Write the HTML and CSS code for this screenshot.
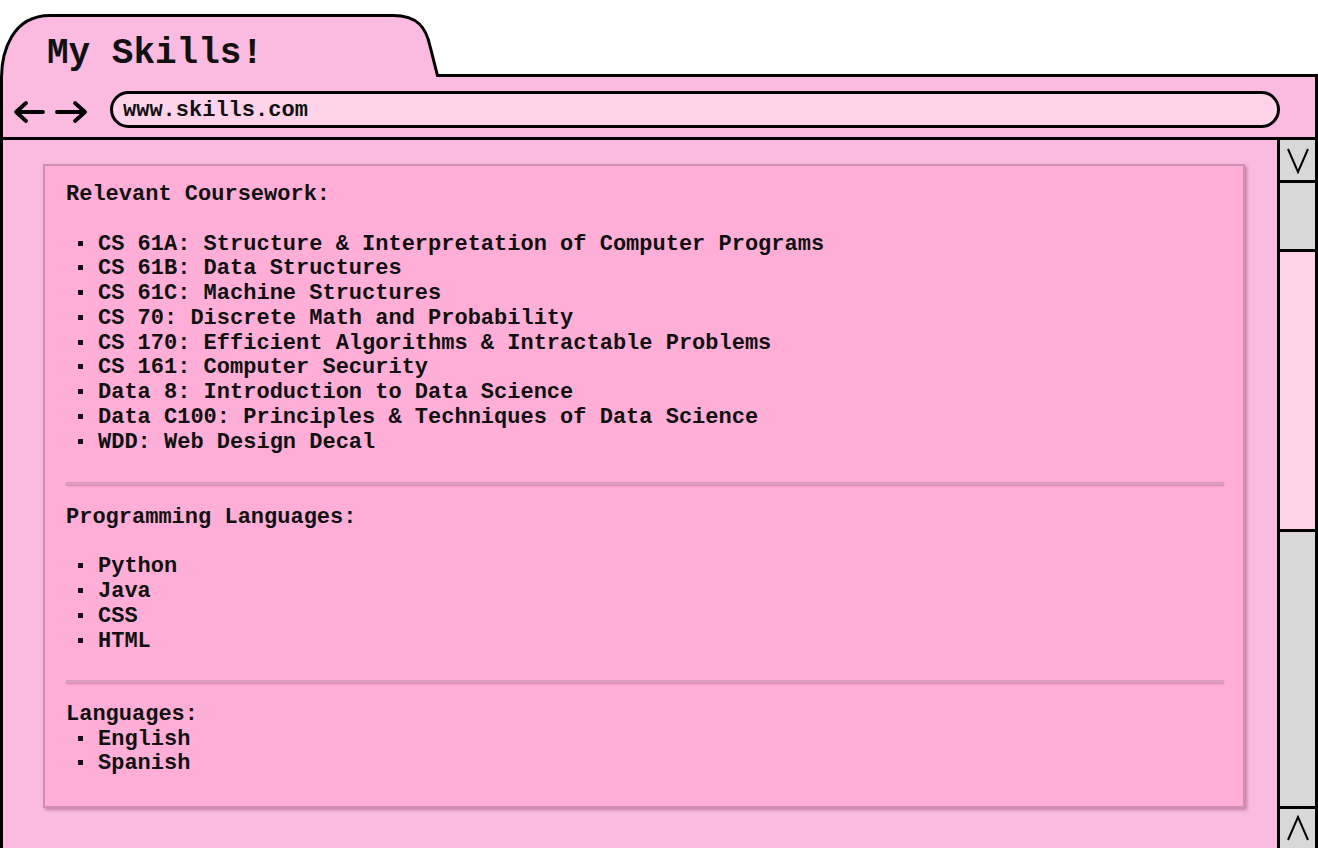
FILE: index.html
```html
<!DOCTYPE html>
<html lang="en">
<head>
<meta charset="utf-8">
<title>My Skills!</title>
<link rel="stylesheet" href="styles.css">
</head>
<body>
<div class="frame">
  <header class="tabrow">
    <div class="tab">
      <svg class="tab-shape" width="442" height="63" viewBox="0 0 442 63" aria-hidden="true">
        <path d="M1.5 64 C1.5 38 12 1.5 50 1.5 L393 1.5 C418 1.5 426 14 430 32 L437.5 61.5 L442 61.5 L442 64 Z" fill="#fbbbe0" stroke="none"/>
        <path d="M1.5 64 C1.5 38 12 1.5 50 1.5 L393 1.5 C418 1.5 426 14 430 32 L437.5 61.5 L442 61.5" fill="none" stroke="#000" stroke-width="3"/>
      </svg>
      <h1 class="title">My Skills!</h1>
    </div>
    <div class="tab-fill"></div>
  </header>
  <div class="window">
    <nav class="navbar">
      <div class="arrows">
        <svg width="80" height="24" viewBox="0 0 80 24" aria-hidden="true">
          <g fill="none" stroke="#000" stroke-width="3.8" stroke-linecap="round" stroke-linejoin="round">
            <path d="M3 12 H30 M13 3 L3 12 L13 21"/>
            <path d="M44 12 H72 M62 3 L72 12 L62 21"/>
          </g>
        </svg>
      </div>
      <div class="url">www.skills.com</div>
    </nav>
    <div class="viewport">
      <main class="page">
        <section class="card">
          <h2 class="sec-title">Relevant Coursework:</h2>
          <ul class="list gap">
            <li>CS 61A: Structure &amp; Interpretation of Computer Programs</li>
            <li>CS 61B: Data Structures</li>
            <li>CS 61C: Machine Structures</li>
            <li>CS 70: Discrete Math and Probability</li>
            <li>CS 170: Efficient Algorithms &amp; Intractable Problems</li>
            <li>CS 161: Computer Security</li>
            <li>Data 8: Introduction to Data Science</li>
            <li>Data C100: Principles &amp; Techniques of Data Science</li>
            <li>WDD: Web Design Decal</li>
          </ul>
          <hr class="rule">
          <h2 class="sec-title">Programming Languages:</h2>
          <ul class="list gap">
            <li>Python</li>
            <li>Java</li>
            <li>CSS</li>
            <li>HTML</li>
          </ul>
          <hr class="rule rule-2">
          <h2 class="sec-title">Languages:</h2>
          <ul class="list">
            <li>English</li>
            <li>Spanish</li>
          </ul>
        </section>
      </main>
      <div class="scrollbar">
        <div class="sb-btn sb-up">
          <svg width="26" height="28" viewBox="0 0 26 28" aria-hidden="true"><path d="M3 3 L13 26 L23 3" fill="none" stroke="#000" stroke-width="2"/></svg>
        </div>
        <div class="sb-track sb-track-top"></div>
        <div class="sb-thumb"></div>
        <div class="sb-track sb-track-bottom"></div>
        <div class="sb-btn sb-down">
          <svg width="26" height="28" viewBox="0 0 26 28" aria-hidden="true"><path d="M3 25 L13 2 L23 25" fill="none" stroke="#000" stroke-width="2"/></svg>
        </div>
      </div>
    </div>
  </div>
</div>
</body>
</html>
```

FILE: styles.css
```css
* { box-sizing: border-box; }

html, body {
  margin: 0;
  padding: 0;
  background: #ffffff;
}

body {
  width: 1318px;
  height: 848px;
  overflow: hidden;
  font-family: "Liberation Mono", "Courier New", monospace;
  font-weight: bold;
  color: #111;
}

.frame {
  display: flex;
  flex-direction: column;
  height: 848px;
  padding-top: 14px;
}

.tabrow {
  display: flex;
  align-items: flex-end;
  height: 63px;
  flex: none;
}

.tab {
  position: relative;
  width: 442px;
  height: 63px;
  flex: none;
}

.tab-shape {
  position: absolute;
  left: 0;
  top: 0;
}

.title {
  position: relative;
  margin: 0;
  padding: 19px 0 0 47px;
  font-size: 36px;
  line-height: 41px;
  font-weight: bold;
}

.tab-fill {
  flex: 1;
  height: 63px;
  border-bottom: 3px solid #000;
}

.window {
  flex: 1;
  display: flex;
  flex-direction: column;
  border-left: 3px solid #000;
  border-right: 3px solid #000;
  background: #fbbbe0;
  min-height: 0;
}

.navbar {
  display: flex;
  align-items: flex-start;
  height: 63px;
  flex: none;
  border-bottom: 3px solid #000;
  padding: 14px 0 0 0;
}

.arrows {
  width: 107px;
  padding: 9px 0 0 10px;
  flex: none;
}

.arrows svg { display: block; }

.url {
  width: 1170px;
  height: 37px;
  border: 3px solid #000;
  border-radius: 19px;
  background: #ffd4ea;
  font-size: 22px;
  line-height: 25px;
  padding: 4px 0 0 10px;
}

.viewport {
  flex: 1;
  display: flex;
  min-height: 0;
}

.page {
  flex: 1;
  padding: 24px 32px 0 40px;
}

.card {
  width: 1202px;
  border: 2px solid #d08fb1;
  box-shadow: 2px 2px 3px rgba(150, 70, 110, 0.5);
  background: #ffafd7;
  padding: 17px 19px 29px 21px;
  font-size: 22px;
  line-height: 24.75px;
}

.sec-title {
  margin: 0;
  font-size: 22px;
  line-height: 24.75px;
  font-weight: bold;
}

.list {
  list-style: none;
  margin: 0;
  padding: 0 0 0 32px;
}

.list.gap { margin-top: 24.75px; }

.list li {
  position: relative;
}

.list li::before {
  content: "";
  position: absolute;
  left: -20px;
  top: 8px;
  width: 5px;
  height: 5px;
  background: #111;
}

.rule {
  border: none;
  height: 3px;
  margin: 27px 0 20.5px 0;
  background: #db9dbf;
  box-shadow: 0 1px 2px rgba(150, 70, 110, 0.45);
}

.rule-2 {
  margin: 26px 0 19.5px 0;
}

.scrollbar {
  width: 38px;
  flex: none;
  display: flex;
  flex-direction: column;
  border-left: 3px solid #000;
  background: #d8d8d8;
}

.sb-btn {
  height: 42px;
  flex: none;
  display: flex;
  justify-content: center;
  align-items: center;
  background: #d8d8d8;
}

.sb-up {
  border-bottom: 3px solid #000;
  height: 43px;
}

.sb-down {
  border-top: 3px solid #000;
}

.sb-track-top {
  height: 66px;
  flex: none;
}

.sb-thumb {
  height: 283px;
  flex: none;
  background: #ffd4ea;
  border-top: 3px solid #000;
  border-bottom: 3px solid #000;
}

.sb-track-bottom {
  flex: 1;
}
```
